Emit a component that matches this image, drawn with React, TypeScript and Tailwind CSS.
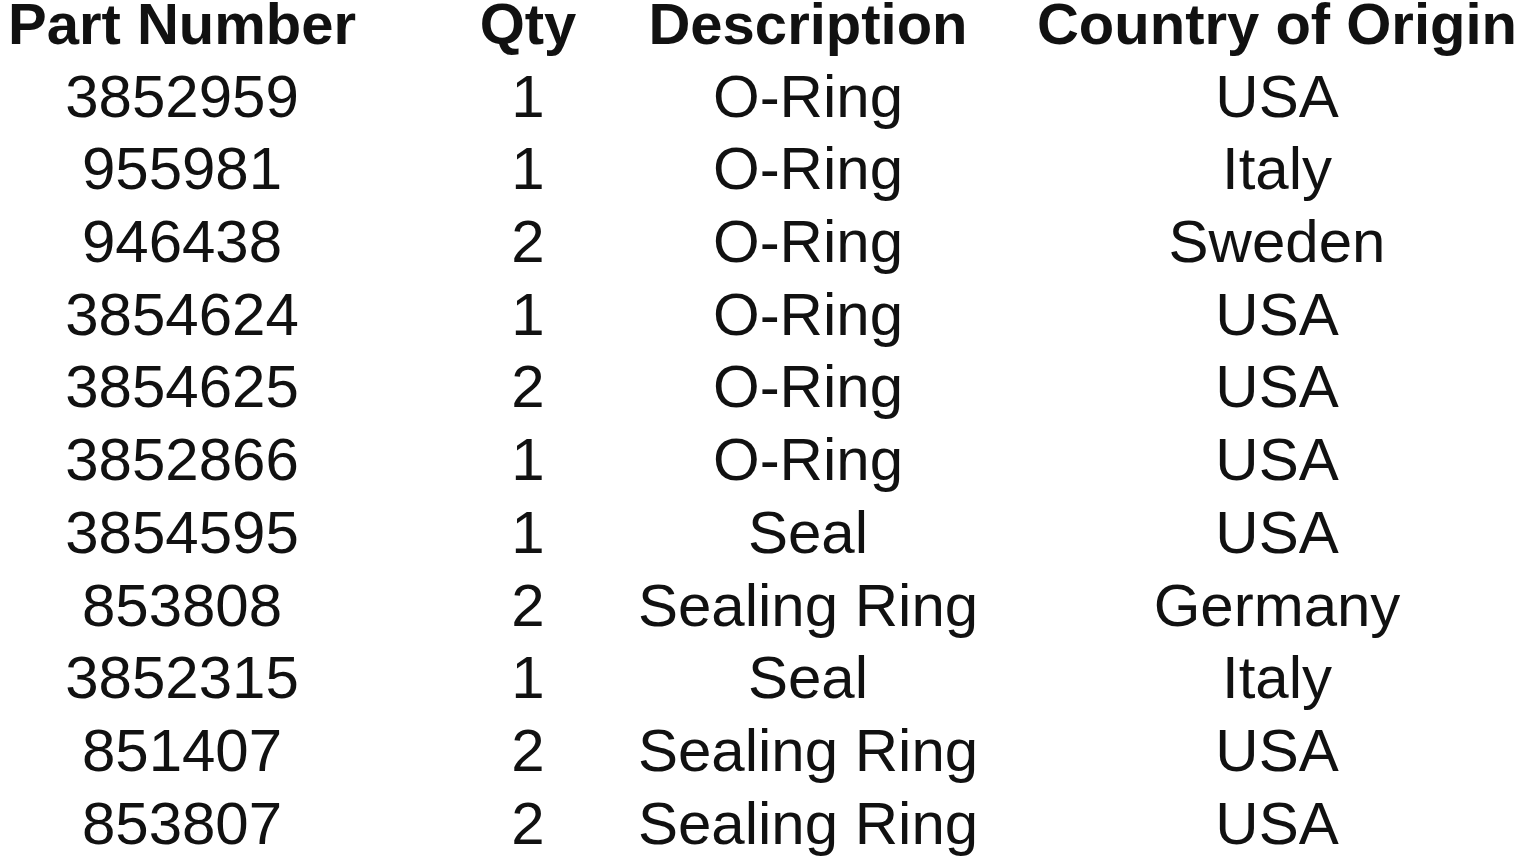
const rows = [
  ["3852959", "1", "O-Ring", "USA"],
  ["955981", "1", "O-Ring", "Italy"],
  ["946438", "2", "O-Ring", "Sweden"],
  ["3854624", "1", "O-Ring", "USA"],
  ["3854625", "2", "O-Ring", "USA"],
  ["3852866", "1", "O-Ring", "USA"],
  ["3854595", "1", "Seal", "USA"],
  ["853808", "2", "Sealing Ring", "Germany"],
  ["3852315", "1", "Seal", "Italy"],
  ["851407", "2", "Sealing Ring", "USA"],
  ["853807", "2", "Sealing Ring", "USA"],
];

// column widths picked so each cell is centred where the scan puts it
const cols = ["w-[364px]", "w-[328px]", "w-[232px]", "w-[706px]"];

function Row({ cells, head }: { cells: string[]; head?: boolean }) {
  return (
    <div
      className={`flex h-[72.7px] leading-[72.7px] whitespace-nowrap ${
        head ? "text-[58px] font-bold" : "text-[60px]"
      }`}
    >
      {cells.map((c, i) => (
        <div key={i} className={`${cols[i]} flex-none flex justify-center`}>
          {c}
        </div>
      ))}
    </div>
  );
}

export default function App() {
  return (
    <div className="w-[1515px] h-[862px] overflow-hidden bg-white text-[#111]">
      <div
        className="-mt-[12px]"
        style={{ fontFamily: '"Liberation Sans", Arial, sans-serif' }}
      >
        <Row head cells={["Part Number", "Qty", "Description", "Country of Origin"]} />
        {rows.map((r) => (
          <Row key={r[0]} cells={r} />
        ))}
      </div>
    </div>
  );
}
